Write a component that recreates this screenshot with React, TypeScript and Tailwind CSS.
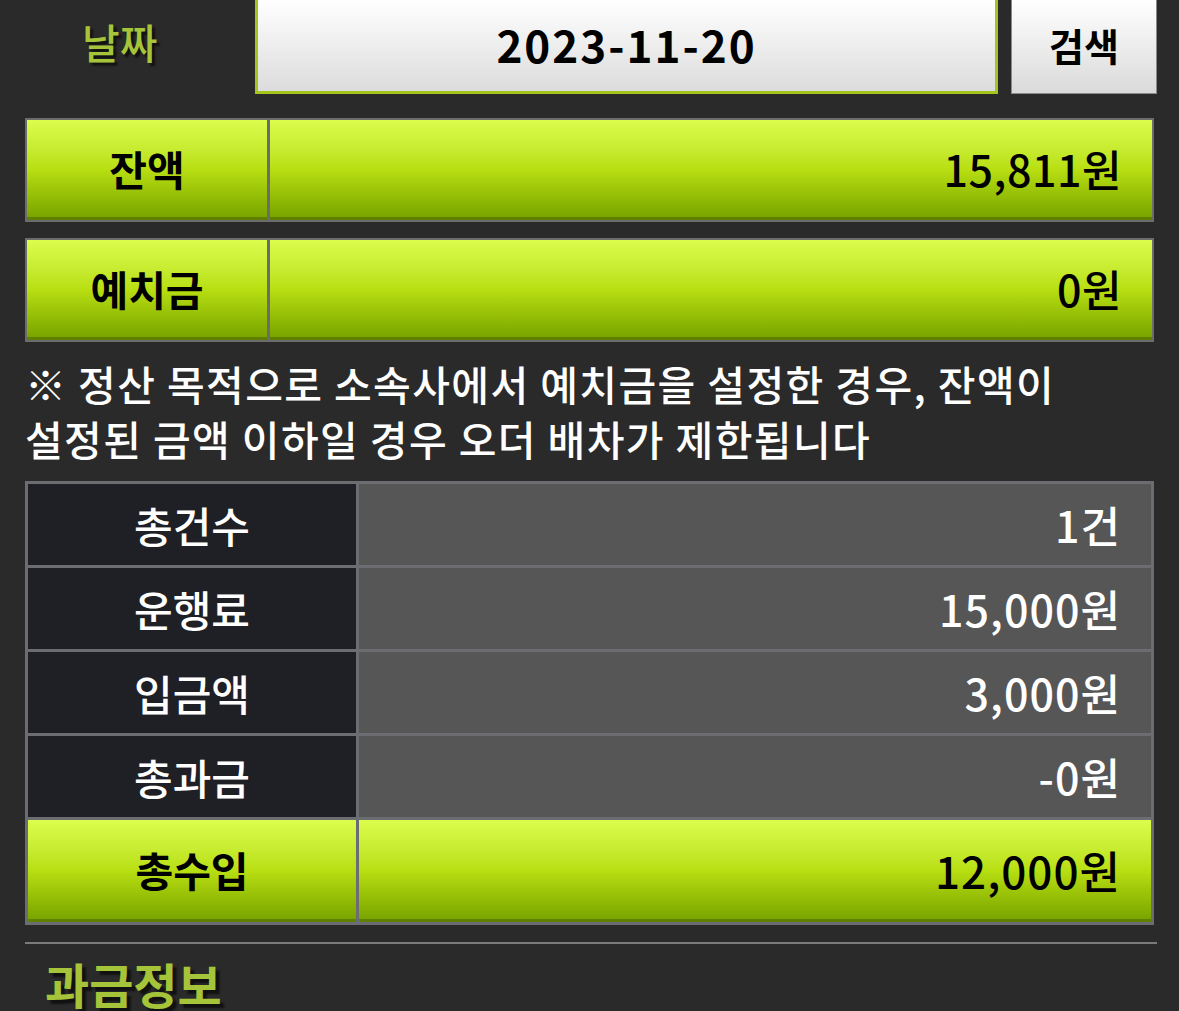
import React from "react";

const font = { fontFamily: '"Noto Sans CJK KR", "Noto Sans", sans-serif' };

const rows = [
  { label: "총건수", value: "1건" },
  { label: "운행료", value: "15,000원" },
  { label: "입금액", value: "3,000원" },
  { label: "총과금", value: "-0원" },
];

const green =
  "bg-gradient-to-b from-[#dcfd4c] via-[#b9e012] to-[#7aa500] border-b-[3px] border-[#5f8000]";

function GreenRow({ label, value }: { label: string; value: string }) {
  return (
    <div className="mr-[3px] grid h-[104px] grid-cols-[240px_1fr] gap-[3px] bg-[#6c6c6c] p-[2px]">
      <div className={`${green} flex items-center justify-center text-[41px] font-bold text-black`}>
        {label}
      </div>
      <div className={`${green} flex items-center justify-end pr-[30px] text-[43px] font-medium tracking-[0.5px] text-black`}>
        {value}
      </div>
    </div>
  );
}

export default function App() {
  return (
    <div style={font} className="h-[1011px] w-[1179px] overflow-hidden bg-[#2a2a2a] pl-[25px] pr-[22px]">
      {/* date search */}
      <div className="flex h-[94px] items-stretch">
        <div className="flex w-[230px] items-center pb-[10px] pl-[57px] text-[41px] font-medium text-[#a5c43a] [text-shadow:3px_3px_2px_#111]">
          날짜
        </div>
        <div className="flex flex-1 items-center justify-center border-[3px] border-t-0 border-[#a3c51c] bg-gradient-to-b from-white to-[#dcdcdc] pb-[4px] text-[44px] font-bold tracking-[2px] text-black">
          2023-11-20
        </div>
        <button className="ml-[13px] flex w-[146px] items-center justify-center border border-t-0 border-[#8a8a8a] bg-gradient-to-b from-white to-[#dadada] pb-[4px] text-[38px] font-bold text-black">
          검색
        </button>
      </div>

      <div className="mt-[24px] flex flex-col gap-[16px]">
        <GreenRow label="잔액" value="15,811원" />
        <GreenRow label="예치금" value="0원" />
      </div>

      <p className="mt-[14px] text-[41px] font-medium leading-[55px] tracking-[1.4px] text-white">
        ※ 정산 목적으로 소속사에서 예치금을 설정한 경우, 잔액이
        <br />
        설정된 금액 이하일 경우 오더 배차가 제한됩니다
      </p>

      {/* summary table */}
      <div className="mr-[3px] mt-[15px] grid grid-cols-[328px_1fr] gap-[3px] bg-[#6b6d72] p-[3px]">
        {rows.map((r) => (
          <React.Fragment key={r.label}>
            <div className="flex h-[81px] items-center justify-center bg-[#1f2025] text-[42px] font-medium text-white">
              {r.label}
            </div>
            <div className="flex h-[81px] items-center justify-end bg-[#565656] pr-[30px] text-[43px] font-medium tracking-[1px] text-white">
              {r.value}
            </div>
          </React.Fragment>
        ))}
        <div className={`${green} flex h-[102px] items-center justify-center text-[41px] font-bold text-black`}>
          총수입
        </div>
        <div className={`${green} flex h-[102px] items-center justify-end pr-[30px] text-[44px] font-medium tracking-[1px] text-black`}>
          12,000원
        </div>
      </div>

      <div className="mt-[17px] h-[2px] bg-[#7a7a7a]" />

      <h2 className="mt-[9px] pl-[20px] text-[48px] font-bold leading-[60px] text-[#a5c43a] [text-shadow:4px_4px_2px_#111]">
        과금정보
      </h2>
    </div>
  );
}
